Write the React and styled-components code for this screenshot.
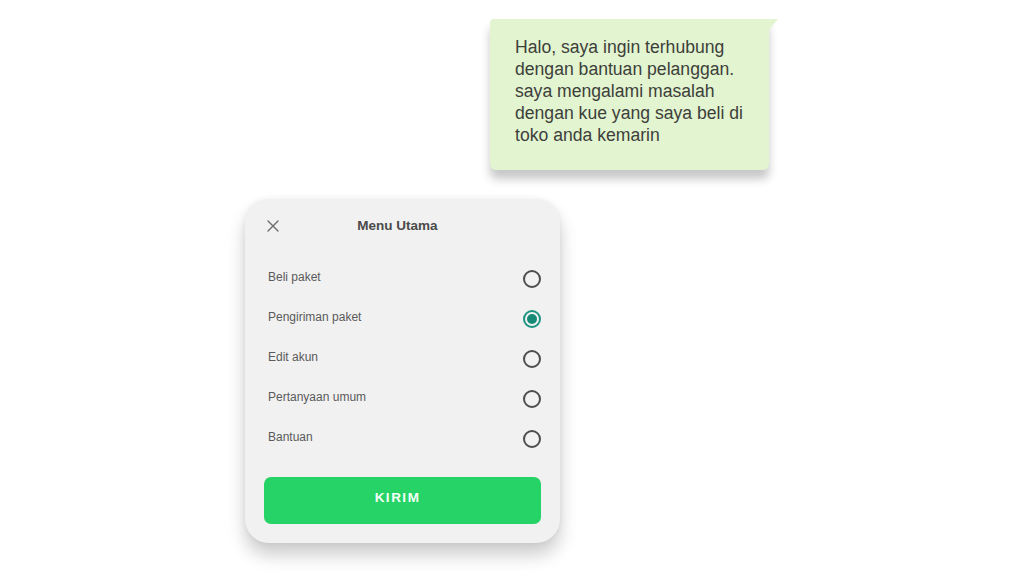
import React, { useState } from 'react';
import styled, { createGlobalStyle } from 'styled-components';

const options = ['Beli paket', 'Pengiriman paket', 'Edit akun', 'Pertanyaan umum', 'Bantuan'];

const App = () => {
  const [selected, setSelected] = useState(1);

  return (
    <Page>
      <GlobalStyle />
      <Bubble>
        Halo, saya ingin terhubung
        <br />
        dengan bantuan pelanggan.
        <br />
        saya mengalami masalah
        <br />
        dengan kue yang saya beli di
        <br />
        toko anda kemarin
      </Bubble>

      <Card>
        <Header>
          <CloseButton aria-label="Tutup">
            <svg width="12" height="12" viewBox="0 0 12 12">
              <path d="M1 1L11 11M11 1L1 11" stroke="#6b6b6b" strokeWidth="1.4" strokeLinecap="round" />
            </svg>
          </CloseButton>
          <Title>Menu Utama</Title>
        </Header>

        <List>
          {options.map((label, i) => (
            <Row key={label} onClick={() => setSelected(i)}>
              <Label>{label}</Label>
              <Radio $checked={selected === i} />
            </Row>
          ))}
        </List>

        <SendButton>KIRIM</SendButton>
      </Card>
    </Page>
  );
};

export default App;

const GlobalStyle = createGlobalStyle`
  html, body {
    margin: 0;
    padding: 0;
    background: #ffffff;
    font-family: "Liberation Sans", Arial, sans-serif;
  }
`;

const Page = styled.div`
  width: 1024px;
  height: 576px;
  padding-top: 19px;
  box-sizing: border-box;
  overflow: hidden;
  display: flex;
  flex-direction: column;
`;

const Bubble = styled.div`
  position: relative;
  margin-left: 490px;
  width: 279px;
  height: 151px;
  box-sizing: border-box;
  padding: 17px 6px 0 25px;
  background: #e3f4d0;
  border-radius: 4px 0 6px 6px;
  color: #3d3f3b;
  font-size: 17.6px;
  line-height: 22px;
  white-space: nowrap;
  box-shadow: 0 9px 10px rgba(0, 0, 0, 0.22);

  &::after {
    content: '';
    position: absolute;
    top: 0;
    right: -9px;
    border-top: 11px solid #e3f4d0;
    border-right: 9px solid transparent;
  }
`;

const Card = styled.div`
  margin-top: 29px;
  margin-left: 245px;
  width: 315px;
  height: 344px;
  box-sizing: border-box;
  padding: 16px 19px 19px;
  background: #f1f1f1;
  border-radius: 24px;
  box-shadow: 0 12px 18px rgba(0, 0, 0, 0.2), 0 0 6px rgba(0, 0, 0, 0.06);
  display: flex;
  flex-direction: column;
`;

const Header = styled.div`
  position: relative;
  height: 20px;
  padding-right: 10px;
  display: flex;
  align-items: center;
  justify-content: center;
`;

const CloseButton = styled.button`
  position: absolute;
  left: 3px;
  top: 5px;
  padding: 0;
  border: none;
  background: none;
  display: flex;
  cursor: pointer;
`;

const Title = styled.h2`
  margin: 0;
  font-size: 13.5px;
  font-weight: 700;
  color: #4a4a4a;
`;

const List = styled.div`
  margin-top: 22px;
  display: flex;
  flex-direction: column;
`;

const Row = styled.label`
  height: 40px;
  padding-left: 4px;
  display: flex;
  align-items: center;
  justify-content: space-between;
  cursor: pointer;
`;

const Label = styled.span`
  font-size: 12px;
  color: #5a5a5a;
`;

const Radio = styled.span`
  width: 18px;
  height: 18px;
  box-sizing: border-box;
  border-radius: 50%;
  border: 2px solid ${(p) => (p.$checked ? '#1b9481' : '#4d4d4d')};
  display: flex;
  align-items: center;
  justify-content: center;
  margin-top: 3px;

  &::after {
    content: '';
    width: 10px;
    height: 10px;
    border-radius: 50%;
    background: #168a77;
    display: ${(p) => (p.$checked ? 'block' : 'none')};
  }
`;

const SendButton = styled.button`
  margin-top: 20px;
  height: 47px;
  padding: 0 10px 6px 0;
  border: none;
  border-radius: 7px;
  background: #25d366;
  color: #f4fff7;
  font-family: "Liberation Sans", Arial, sans-serif;
  font-size: 13.5px;
  font-weight: 700;
  letter-spacing: 1.5px;
  cursor: pointer;
`;
